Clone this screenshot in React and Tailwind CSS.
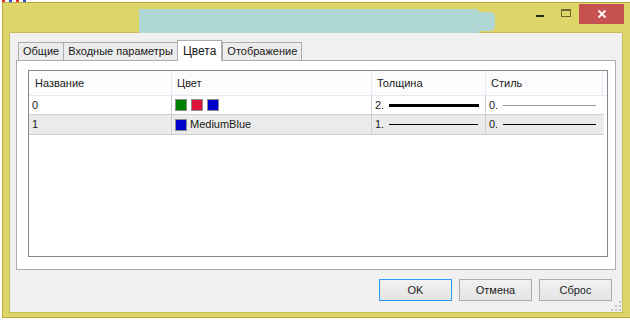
import React from 'react';

const font = { fontFamily: '"Liberation Sans", Arial, sans-serif' };

const tabs = ['Общие', 'Входные параметры', 'Цвета', 'Отображение'];

const Swatch = ({ color }) => (
  <span className={`inline-block w-[12px] h-[12px] border border-[#8c8c8c] ${color}`} />
);

const Line = ({ thick, gray }) => (
  <span
    className={`flex-1 ${thick ? 'h-[3px]' : 'h-px'} ${gray ? 'bg-[#9a9a9a]' : 'bg-black'}`}
  />
);

const TitleButtons = () => (
  <div className="flex items-start h-full">
    <div className="w-[26px] h-[20px] flex items-center justify-center">
      <span className="mt-[6px] w-[8px] h-[2px] bg-[#2a2a2a]" />
    </div>
    <div className="w-[26px] h-[20px] flex items-center justify-center">
      <span className="w-[10px] h-[8px] border border-[#6b6530] border-t-2" />
    </div>
    <div className="w-[45px] h-[20px] bg-[#c75050] flex items-center justify-center mt-px">
      <svg width="10" height="10" viewBox="0 0 10 10">
        <path d="M1.5 1.5 L8.5 8.5 M8.5 1.5 L1.5 8.5" stroke="white" strokeWidth="1.8" />
      </svg>
    </div>
  </div>
);

const Button = ({ label, focused }) => (
  <button
    className={`w-[73px] h-[22px] text-[11px] font-normal text-[#1a1a1a] bg-gradient-to-b from-[#f2f2f2] to-[#e4e4e4] border ${
      focused ? 'border-[#3399ff]' : 'border-[#acacac]'
    }`}
  >
    {label}
  </button>
);

export default function App() {
  return (
    <div className="relative w-[630px] h-[320px] overflow-hidden bg-white" style={font}>
      <div className="absolute left-[2px] top-0 h-[2px] w-[25px] flex">
        <span className="w-[3px] bg-[#e03030]" />
        <span className="w-[4px] bg-[#ffffff]" />
        <span className="w-[3px] bg-[#3050e0]" />
        <span className="w-[4px] bg-[#ffffff]" />
        <span className="w-[3px] bg-[#e03030]" />
        <span className="w-[4px] bg-[#ffffff]" />
        <span className="w-[3px] bg-[#3050e0]" />
      </div>

      <div className="absolute left-[2px] top-[2px] w-[634px] h-[316px] bg-[#dfd669] border border-[#b6ac45] flex flex-col">
        {/* title bar */}
        <div className="h-[29px] flex items-start pr-[11px]">
          <div className="flex-1 relative">
            <div className="absolute left-[136px] top-[6px] w-[340px] h-[24px] bg-[#afd7d6] rounded-tr-[4px]" />
            <div className="absolute left-[430px] top-[9px] w-[62px] h-[19px] bg-[#afd7d6] rounded-[5px]" />
          </div>
          <TitleButtons />
        </div>

        {/* client area */}
        <div className="ml-[6px] mr-[12px] h-[281px] bg-[#f0f0f0] border border-[#c7bd55] flex flex-col text-[11px] text-[#1a1a1a]">
          <div className="flex items-end h-[28px] pl-[8px]">
            {tabs.map((t) =>
              t === 'Цвета' ? (
                <div
                  key={t}
                  className="h-[21px] px-[5px] bg-white border border-[#acacac] border-b-0 -mb-px relative z-10 flex items-center text-[12px]"
                >
                  {t}
                </div>
              ) : (
                <div
                  key={t}
                  className="h-[18px] px-[4px] bg-[#ececec] border border-[#acacac] border-b-0 -mr-px flex items-center"
                >
                  {t}
                </div>
              )
            )}
          </div>

          <div className="ml-[6px] mr-[6px] h-[216px] bg-white border border-[#acacac] pt-[9px] pl-[11px] pr-[7px] pb-[12px]">
            <div className="h-full border border-[#828790] bg-white">
              <div className="flex h-[25px] bg-[#fcfcfd] border-b border-[#e3e9f2]">
                <div className="w-[143px] pl-[6px] flex items-center border-r border-[#e5ebf4]">Название</div>
                <div className="w-[200px] pl-[5px] flex items-center border-r border-[#e5ebf4]">Цвет</div>
                <div className="w-[114px] pl-[5px] flex items-center border-r border-[#e5ebf4]">Толщина</div>
                <div className="w-[117px] pl-[5px] flex items-center border-r border-[#e5ebf4]">Стиль</div>
              </div>

              <div className="flex h-[19px] bg-white border-b border-[#cfcfcf] w-[575px]">
                <div className="w-[143px] pl-[3px] flex items-center border-r border-[#cfcfcf]">0</div>
                <div className="w-[200px] pl-[3px] flex items-center gap-[4px] border-r border-[#cfcfcf]">
                  <Swatch color="bg-[#008000]" />
                  <Swatch color="bg-[#dc143c]" />
                  <Swatch color="bg-[#0000cd]" />
                </div>
                <div className="w-[114px] pl-[3px] pr-[6px] flex items-center gap-[5px] border-r border-[#cfcfcf]">
                  <span>2.</span>
                  <Line thick />
                </div>
                <div className="w-[117px] pl-[3px] pr-[7px] flex items-center gap-[5px]">
                  <span>0.</span>
                  <Line gray />
                </div>
              </div>

              <div className="flex h-[20px] bg-[#ebebeb] border-b border-[#cfcfcf] w-[575px]">
                <div className="w-[143px] pl-[3px] flex items-center border-r border-[#cfcfcf]">1</div>
                <div className="w-[200px] pl-[3px] flex items-center gap-[3px] border-r border-[#cfcfcf]">
                  <Swatch color="bg-[#0000cd]" />
                  <span>MediumBlue</span>
                </div>
                <div className="w-[114px] pl-[3px] pr-[7px] flex items-center gap-[5px] border-r border-[#cfcfcf]">
                  <span>1.</span>
                  <Line />
                </div>
                <div className="w-[117px] pl-[3px] pr-[7px] flex items-center gap-[5px]">
                  <span>0.</span>
                  <Line />
                </div>
              </div>
            </div>
          </div>

          <div className="flex justify-end gap-[7px] mt-[9px] mr-[10px]">
            <Button label="OK" focused />
            <Button label="Отмена" />
            <Button label="Сброс" />
          </div>

          <div className="flex-1 flex items-end justify-end pr-px pb-px">
            <svg width="10" height="10" viewBox="0 0 10 10">
              <rect x="8" y="0" width="2" height="2" fill="#c4c4c4" />
              <rect x="4" y="4" width="2" height="2" fill="#c4c4c4" />
              <rect x="8" y="4" width="2" height="2" fill="#c4c4c4" />
              <rect x="0" y="8" width="2" height="2" fill="#c4c4c4" />
              <rect x="4" y="8" width="2" height="2" fill="#c4c4c4" />
              <rect x="8" y="8" width="2" height="2" fill="#c4c4c4" />
            </svg>
          </div>
        </div>
      </div>
    </div>
  );
}
